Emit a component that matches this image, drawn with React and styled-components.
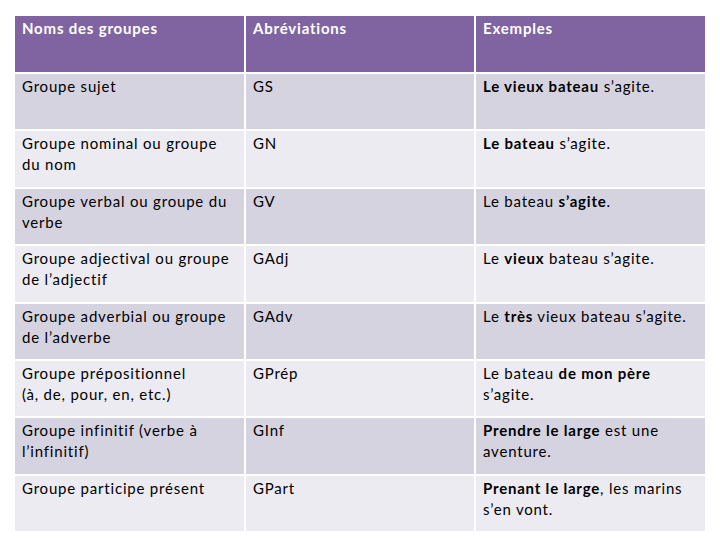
import React from "react";
import styled, { createGlobalStyle } from "styled-components";

const GlobalStyle = createGlobalStyle`
  html, body {
    margin: 0;
    padding: 0;
    background: #fff;
  }
  body {
    font-family: Lato, "Open Sans", "Liberation Sans", sans-serif;
  }
`;

const Page = styled.div`
  width: 720px;
  height: 540px;
  padding: 16px 15px 0 15px;
  box-sizing: border-box;
`;

const Table = styled.div`
  display: grid;
  grid-template-columns: 229px 228px 229px;
  grid-template-rows: 56px repeat(8, 55.4px);
  column-gap: 2px;
  row-gap: 2px;
`;

const Cell = styled.div`
  background: ${(p) => (p.$head ? "#8064a2" : p.$dark ? "#d6d3e0" : "#ecebf1")};
  color: ${(p) => (p.$head ? "#ffffff" : "#000000")};
  font-weight: ${(p) => (p.$head ? 700 : 400)};
  font-size: 15px;
  letter-spacing: 0.8px;
  line-height: 21px;
  padding: 2px 6px 0 7px;
  box-sizing: border-box;
`;

const B = styled.b`
  font-weight: 700;
`;

const rows = [
  ["Groupe sujet", "GS", <><B>Le vieux bateau</B> s’agite.</>],
  ["Groupe nominal ou groupe du nom", "GN", <><B>Le bateau</B> s’agite.</>],
  ["Groupe verbal ou groupe du verbe", "GV", <>Le bateau <B>s’agite</B>.</>],
  ["Groupe adjectival ou groupe de l’adjectif", "GAdj", <>Le <B>vieux</B> bateau s’agite.</>],
  ["Groupe adverbial ou groupe de l’adverbe", "GAdv", <>Le <B>très</B> vieux bateau s’agite.</>],
  [<>Groupe prépositionnel<br />(à, de, pour, en, etc.)</>, "GPrép", <>Le bateau <B>de mon père</B> s’agite.</>],
  ["Groupe infinitif (verbe à l’infinitif)", "GInf", <><B>Prendre le large</B> est une aventure.</>],
  ["Groupe participe présent", "GPart", <><B>Prenant le large</B>, les marins s’en vont.</>],
];

export default function App() {
  return (
    <>
      <GlobalStyle />
      <Page>
        <Table>
          <Cell $head>Noms des groupes</Cell>
          <Cell $head>Abréviations</Cell>
          <Cell $head>Exemples</Cell>
          {rows.map((r, i) => (
            <React.Fragment key={i}>
              {r.map((c, j) => (
                <Cell key={j} $dark={i % 2 === 0}>
                  {c}
                </Cell>
              ))}
            </React.Fragment>
          ))}
        </Table>
      </Page>
    </>
  );
}
